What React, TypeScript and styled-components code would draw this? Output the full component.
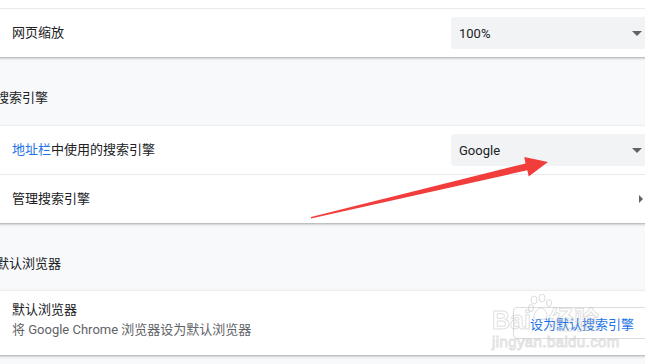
import React from 'react';
import styled, {createGlobalStyle} from 'styled-components';

const TEXT = '#202124';
const SUB = '#5f6368';
const BLUE = '#1a73e8';
const PAGE_BG = '#f8f9fa';
const FIELD_BG = '#f1f3f4';
const LINE = '#e8eaed';

const GlobalStyle = createGlobalStyle`
  html, body {
    margin: 0;
    padding: 0;
    background: ${PAGE_BG};
    overflow: hidden;
  }
  body {
    font-family: Roboto, "Noto Sans CJK SC", sans-serif;
    font-size: 13px;
    color: ${TEXT};
  }
`;

const Viewport = styled.div`
  position: relative;
  width: 645px;
  height: 364px;
  overflow: hidden;
`;

const Main = styled.div`
  width: 700px;
  margin: -40px 0 0 -16px;
`;

const Card = styled.div`
  background: #fff;
  border-radius: 4px;
  box-shadow: 0 1px 2px rgba(60, 64, 67, 0.3), 0 1px 3px 1px rgba(60, 64, 67, 0.12);
`;

const Row = styled.div<{$h?: number; $first?: boolean}>`
  display: flex;
  align-items: center;
  height: ${({$h}) => $h ?? 48}px;
  padding: 0 33px 0 28px;
  border-top: ${({$first}) => ($first ? 'none' : `1px solid ${LINE}`)};
`;

const Label = styled.div`
  flex: 1;
  line-height: 20px;
`;

const LabelBlock = styled.div`
  flex: 1;
  padding-bottom: 6px;
  line-height: 20px;
`;

const Secondary = styled.div`
  color: ${SUB};
`;

const Link = styled.span`
  color: ${BLUE};
`;

const Heading = styled.div<{$top: number; $bottom: number}>`
  padding: ${({$top}) => $top}px 0 ${({$bottom}) => $bottom}px 12px;
  line-height: 18px;
  color: ${TEXT};
`;

const Select = styled.div`
  display: flex;
  align-items: center;
  justify-content: space-between;
  width: 200px;
  height: 32px;
  box-sizing: border-box;
  padding: 0 9px 0 8px;
  background: ${FIELD_BG};
  border-radius: 4px;
  color: ${TEXT};
`;

const Caret = styled.span`
  width: 0;
  height: 0;
  border-left: 5px solid transparent;
  border-right: 5px solid transparent;
  border-top: 5px solid ${SUB};
`;

const SubpageArrow = styled.div`
  width: 20px;
  display: flex;
  justify-content: center;
  &:after {
    content: '';
    width: 0;
    height: 0;
    border-top: 4px solid transparent;
    border-bottom: 4px solid transparent;
    border-left: 4px solid ${SUB};
  }
`;

const OutlineButton = styled.button`
  height: 32px;
  padding: 0 16px;
  border: 1px solid #dadce0;
  border-radius: 4px;
  background: #fff;
  color: ${BLUE};
  font: inherit;
  white-space: nowrap;
`;

const Watermark = styled.div`
  position: absolute;
  left: 492px;
  top: 308px;
  width: 130px;
  color: transparent;
  -webkit-text-stroke: 1px rgba(185, 185, 185, 0.45);
  font-family: "Liberation Sans", "Noto Sans CJK SC", sans-serif;
  pointer-events: none;
`;

const MarkTop = styled.div`
  display: flex;
  align-items: flex-end;
  font-size: 25px;
  font-weight: 700;
  line-height: 25px;
`;

const PawBox = styled.span`
  align-self: flex-start;
  margin: -14px -4px 0 -4px;
`;

const MarkUrl = styled.div`
  font-size: 15px;
  line-height: 17px;
  letter-spacing: 0.4px;
`;

const Overlay = styled.svg`
  position: absolute;
  left: 0;
  top: 0;
  pointer-events: none;
`;

const Paw = () => (
  <svg width="26" height="28" viewBox="0 0 26 28" fill="none" stroke="rgba(185,185,185,0.5)" strokeWidth="1">
    <ellipse cx="7" cy="6" rx="3" ry="4" />
    <ellipse cx="15" cy="4" rx="3" ry="4" />
    <ellipse cx="22" cy="9" rx="2.5" ry="3.5" />
    <ellipse cx="4" cy="14" rx="2.5" ry="3.5" />
    <path d="M7 23c0-5 4-9 7-9s6 4 6 8c0 3-3 4-6 3-3 1-7 1-7-2z" />
  </svg>
);

export default function App() {
  return (
    <Viewport>
      <GlobalStyle />
      <Main>
        <Card>
          <Row $first />
          <Row>
            <Label>网页缩放</Label>
            <Select>
              <span>100%</span>
              <Caret />
            </Select>
          </Row>
        </Card>

        <Heading $top={32} $bottom={19}>搜索引擎</Heading>
        <Card>
          <Row $first>
            <Label>
              <Link>地址栏</Link>中使用的搜索引擎
            </Label>
            <Select>
              <span>Google</span>
              <Caret />
            </Select>
          </Row>
          <Row>
            <Label>管理搜索引擎</Label>
            <SubpageArrow />
          </Row>
        </Card>

        <Heading $top={32} $bottom={18}>默认浏览器</Heading>
        <Card>
          <Row $first $h={64}>
            <LabelBlock>
              <div>默认浏览器</div>
              <Secondary>将 Google Chrome 浏览器设为默认浏览器</Secondary>
            </LabelBlock>
            <OutlineButton>设为默认搜索引擎</OutlineButton>
          </Row>
        </Card>
      </Main>

      <Watermark>
        <MarkTop>
          <span>Bai</span>
          <PawBox>
            <Paw />
          </PawBox>
          <span>经验</span>
        </MarkTop>
        <MarkUrl>jingyan.baidu.com</MarkUrl>
      </Watermark>

      <Overlay width="645" height="364" viewBox="0 0 645 364">
        <polygon
          points="311,217 525.5,163.5 524.3,157.1 548,162 528.7,176.6 527.3,170.3 311,218.5"
          fill="#f23d3d"
        />
      </Overlay>
    </Viewport>
  );
}
